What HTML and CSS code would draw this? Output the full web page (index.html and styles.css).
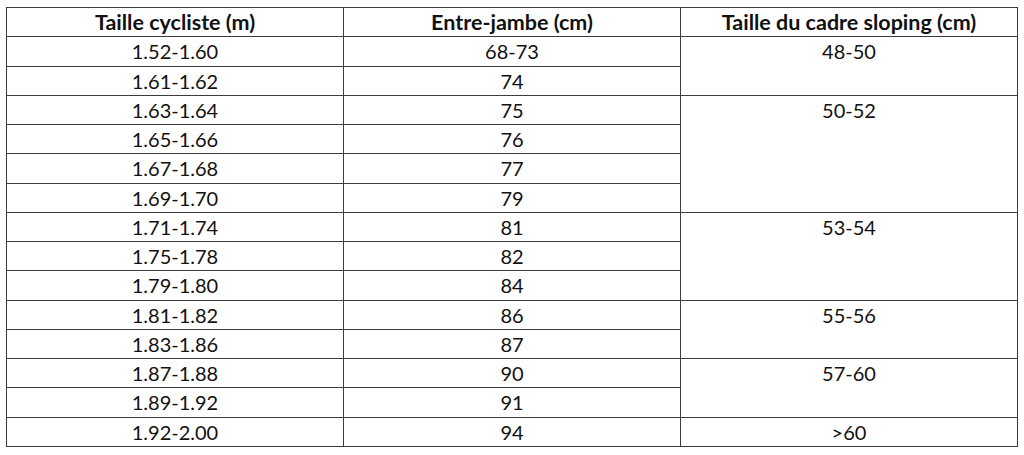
FILE: index.html
```html
<!DOCTYPE html>
<html lang="fr">
<head>
<meta charset="utf-8">
<title>Tailles cadre</title>
<link rel="stylesheet" href="styles.css">
</head>
<body>
<table class="sizes">
  <thead>
    <tr><th>Taille cycliste (m)</th><th>Entre-jambe (cm)</th><th>Taille du cadre sloping (cm)</th></tr>
  </thead>
  <tbody>
    <tr><td>1.52-1.60</td><td>68-73</td><td rowspan="2">48-50</td></tr>
    <tr><td>1.61-1.62</td><td>74</td></tr>
    <tr><td>1.63-1.64</td><td>75</td><td rowspan="4">50-52</td></tr>
    <tr><td>1.65-1.66</td><td>76</td></tr>
    <tr><td>1.67-1.68</td><td>77</td></tr>
    <tr><td>1.69-1.70</td><td>79</td></tr>
    <tr><td>1.71-1.74</td><td>81</td><td rowspan="3">53-54</td></tr>
    <tr><td>1.75-1.78</td><td>82</td></tr>
    <tr><td>1.79-1.80</td><td>84</td></tr>
    <tr><td>1.81-1.82</td><td>86</td><td rowspan="2">55-56</td></tr>
    <tr><td>1.83-1.86</td><td>87</td></tr>
    <tr><td>1.87-1.88</td><td>90</td><td rowspan="2">57-60</td></tr>
    <tr><td>1.89-1.92</td><td>91</td></tr>
    <tr><td>1.92-2.00</td><td>94</td><td>&gt;60</td></tr>
  </tbody>
</table>
</body>
</html>
```
FILE: styles.css
```css
html, body {
  background: #ffffff;
}
body {
  margin: 7px 0 0 6px;
  font-family: Lato, "Liberation Sans", sans-serif;
  color: #111111;
}
.sizes {
  border-collapse: collapse;
  width: 1012px;
  table-layout: fixed;
}
.sizes th,
.sizes td {
  border: 1px solid #3c3c3c;
  padding: 0;
  text-align: center;
  vertical-align: top;
}
.sizes th {
  font-weight: bold;
  font-size: 21.5px;
  height: 28.27px;
  line-height: 28px;
}
.sizes td {
  font-size: 20px;
  height: 27.27px;
  line-height: 27px;
  padding-top: 1px;
}
```
